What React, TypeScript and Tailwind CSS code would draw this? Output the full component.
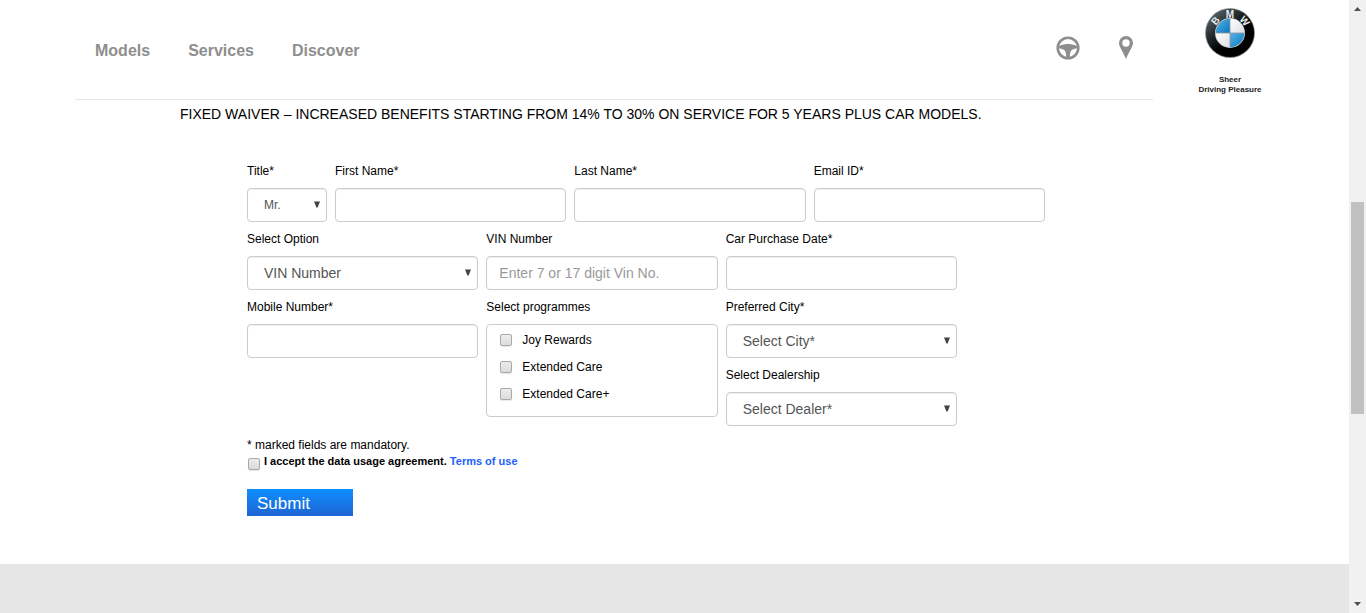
import React, { useId } from "react";

const control =
  "h-[34px] w-full rounded border border-[#ccc] bg-white text-sm text-[#555] shadow-[inset_0_1px_1px_rgba(0,0,0,0.075)]";

const checkbox =
  "size-3 shrink-0 appearance-none rounded-[2px] border border-[#a9a9a9] bg-linear-to-b from-[#ececec] to-[#dcdcdc] shadow-[0_1px_1px_rgba(0,0,0,0.1)] checked:from-[#0a84ff] checked:to-[#1c69d4]";

function Label({ htmlFor, children }: { htmlFor: string; children: React.ReactNode }) {
  return (
    <label htmlFor={htmlFor} className="block text-xs leading-[34px] whitespace-nowrap">
      {children}
    </label>
  );
}

function TextField({ label, placeholder, type = "text" }: { label: string; placeholder?: string; type?: string }) {
  const id = useId();
  return (
    <div>
      <Label htmlFor={id}>{label}</Label>
      <input id={id} type={type} placeholder={placeholder} className={`${control} px-3 placeholder:text-[#999]`} />
    </div>
  );
}

function SelectField({ label, options, small = false }: { label: string; options: string[]; small?: boolean }) {
  const id = useId();
  return (
    <div>
      <Label htmlFor={id}>{label}</Label>
      <div className="relative">
        <select id={id} className={`${control} appearance-none px-4 ${small ? "text-xs" : ""}`}>
          {options.map((option) => (
            <option key={option}>{option}</option>
          ))}
        </select>
        <svg viewBox="0 0 6 7" className="pointer-events-none absolute top-[13px] right-[7px] h-[7px] w-1.5 fill-[#444]" aria-hidden="true">
          <path d="M0 0.5h6L3.6 6.5H2.4Z" />
        </svg>
      </div>
    </div>
  );
}

function WheelIcon() {
  return (
    <svg viewBox="0 0 24 24" className="size-6" aria-hidden="true">
      <circle cx="12" cy="12" r="10.3" fill="none" stroke="#8e8e8e" strokeWidth="2.6" />
      <path
        fill="#8e8e8e"
        d="M2 9.900C5.500 9.500 7.300 8 12 8s6.500 1.500 10 1.900v2.300c-3.300.2-5.600.9-6.700 2.400-.9 1.200-1.500 3.300-1.500 7.400h-3.600c0-4.100-.6-6.200-1.500-7.400C7.600 13.100 5.300 12.400 2 12.200Z"
      />
    </svg>
  );
}

function PinIcon() {
  return (
    <svg viewBox="0 0 14 23" className="h-[23px] w-3.5" aria-hidden="true">
      <path
        fill="#8e8e8e"
        fillRule="evenodd"
        d="M7 0a7 7 0 0 1 7 7c0 3.600-3.500 7.800-7 16C3.500 14.800 0 10.600 0 7a7 7 0 0 1 7-7Zm0 3.300a3.700 3.700 0 1 0 0 7.400 3.700 3.700 0 0 0 0-7.400Z"
      />
    </svg>
  );
}

function Roundel() {
  return (
    <svg viewBox="0 0 50 50" className="size-[50px]" role="img" aria-label="BMW">
      <defs>
        <linearGradient id="ring" x1="0.1" y1="0.1" x2="0.65" y2="0.75">
          <stop offset="0" stopColor="#59666b" />
          <stop offset="0.45" stopColor="#22282b" />
          <stop offset="0.75" stopColor="#020303" />
          <stop offset="1" stopColor="#000" />
        </linearGradient>
        <linearGradient id="blue" x1="0" y1="0" x2="1" y2="1">
          <stop offset="0" stopColor="#58b4e6" />
          <stop offset="1" stopColor="#0877bd" />
        </linearGradient>
        <linearGradient id="white" x1="0" y1="0" x2="1" y2="1">
          <stop offset="0" stopColor="#fff" />
          <stop offset="1" stopColor="#dcdfe1" />
        </linearGradient>
      </defs>
      <circle cx="25" cy="25" r="24.500" fill="url(#ring)" stroke="#8b9396" strokeWidth="0.7" />
      <circle cx="25" cy="25" r="15" fill="#c9ced1" />
      <path d="M25 25V10.800A14.200 14.200 0 0 0 10.800 25Z" fill="url(#blue)" />
      <path d="M25 25V39.200A14.200 14.200 0 0 0 39.200 25Z" fill="url(#blue)" />
      <path d="M25 25V10.800A14.200 14.200 0 0 1 39.200 25Z" fill="url(#white)" />
      <path d="M25 25V39.200A14.200 14.200 0 0 1 10.800 25Z" fill="url(#white)" />
      <path d="M25 10.500v29M10.500 25h29" stroke="#8d989e" strokeWidth="0.8" />
      <g fill="#e9ecee" fontFamily="Liberation Sans, sans-serif" fontWeight="700" fontSize="10" textAnchor="middle">
        <text x="25" y="9.500" transform="rotate(-50 25 25)">B</text>
        <text x="25" y="9.500">M</text>
        <text x="25" y="9.500" transform="rotate(51 25 25)">W</text>
      </g>
    </svg>
  );
}

function Header() {
  return (
    <header className="flex items-start pr-[86px] pl-[75px]">
      <div className="flex h-[100px] flex-1 items-center justify-between border-b border-[#e6e6e6] pr-5 pl-5">
        <nav className="flex gap-[38px] pt-0.5 text-base font-bold text-[#8e8e8e]">
          <a href="#models">Models</a>
          <a href="#services">Services</a>
          <a href="#discover">Discover</a>
        </nav>
        <div className="flex items-center gap-[39px] pb-1">
          <a href="#test-drive" aria-label="Test drive">
            <WheelIcon />
          </a>
          <a href="#dealers" aria-label="Find a dealer">
            <PinIcon />
          </a>
        </div>
      </div>
      <a href="#home" className="ml-11 flex w-[66px] flex-col items-center pt-2 text-center text-[8px] leading-[10px] font-bold whitespace-nowrap text-[#222]">
        <Roundel />
        <span className="mt-[17px]">
          Sheer
          <br />
          Driving Pleasure
        </span>
      </a>
    </header>
  );
}

function Programmes() {
  return (
    <fieldset>
      <legend className="block text-xs leading-[34px]">Select programmes</legend>
      <div className="flex h-[93px] flex-col gap-[11px] rounded border border-[#ccc] px-[13px] pt-[7px]">
        {["Joy Rewards", "Extended Care", "Extended Care+"].map((name) => (
          <label key={name} className="flex items-center gap-2.5 text-xs leading-4">
            <input type="checkbox" className={checkbox} />
            {name}
          </label>
        ))}
      </div>
    </fieldset>
  );
}

function ScrollRail() {
  return (
    <div className="flex w-[17px] shrink-0 flex-col items-center bg-[#f1f1f1]" aria-hidden="true">
      <svg viewBox="0 0 7 4" className="mt-[7px] h-1 w-[7px] fill-[#505050]">
        <path d="M3.500 0 7 4H0Z" />
      </svg>
      <div className="grow-[191]" />
      <div className="w-[13px] grow-[212] bg-[#c1c1c1]" />
      <div className="grow-[188]" />
      <svg viewBox="0 0 7 4" className="mb-[7px] h-1 w-[7px] fill-[#505050]">
        <path d="M0 0h7L3.500 4Z" />
      </svg>
    </div>
  );
}

export default function App() {
  return (
    <div className="flex min-h-screen bg-white font-['Liberation_Sans',Arial,sans-serif] text-black">
      <div className="flex min-w-0 flex-1 flex-col">
        <Header />
        <main className="pb-12">
          <h1 className="pt-1 pl-[180px] text-sm leading-5">
            FIXED WAIVER – INCREASED BENEFITS STARTING FROM 14% TO 30% ON SERVICE FOR 5 YEARS PLUS CAR MODELS.
          </h1>
          <form className="mt-[30px] mr-[304px] ml-[247px]" onSubmit={(event) => event.preventDefault()}>
            <div className="grid grid-cols-[80px_1fr_1fr_1fr] gap-x-2">
              <SelectField label="Title*" options={["Mr.", "Ms.", "Mrs."]} small />
              <TextField label="First Name*" />
              <TextField label="Last Name*" />
              <TextField label="Email ID*" type="email" />
            </div>
            <div className="mr-[88px] grid grid-cols-3 items-start gap-x-2">
              <SelectField label="Select Option" options={["VIN Number", "Registration Number"]} />
              <TextField label="VIN Number" placeholder="Enter 7 or 17 digit Vin No." />
              <TextField label="Car Purchase Date*" />
              <TextField label="Mobile Number*" type="tel" />
              <Programmes />
              <div>
                <SelectField label="Preferred City*" options={["Select City*"]} />
                <SelectField label="Select Dealership" options={["Select Dealer*"]} />
              </div>
            </div>
            <p className="mt-2.5 text-xs leading-[18px]">* marked fields are mandatory.</p>
            <div className="flex items-start gap-1 pl-px text-[11px] leading-[14px] font-bold">
              <input id="agreement" type="checkbox" className={`${checkbox} mt-1`} />
              <p>
                <label htmlFor="agreement">I accept the data usage agreement.</label>{" "}
                <a href="#terms" className="text-[#1c5fff]">
                  Terms of use
                </a>
              </p>
            </div>
            <button
              type="submit"
              className="mt-[19px] block h-[27px] w-[106px] bg-linear-to-b from-[#0c8fff] to-[#1c64d2] px-2.5 pt-px text-left text-[17px] leading-[27px] text-white"
            >
              Submit
            </button>
          </form>
        </main>
        <footer className="min-h-[49px] flex-1 bg-[#e6e6e6]" />
      </div>
      <ScrollRail />
    </div>
  );
}
